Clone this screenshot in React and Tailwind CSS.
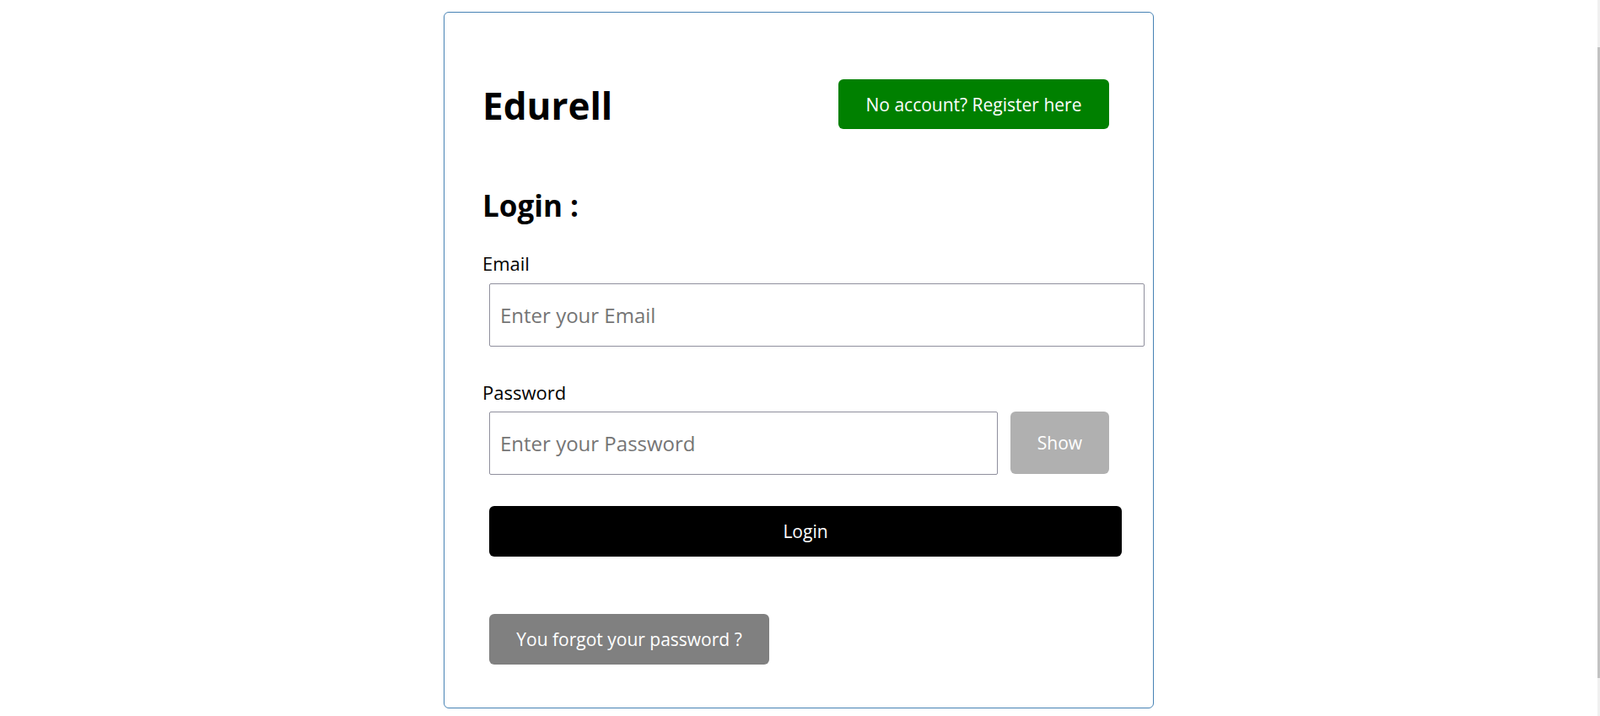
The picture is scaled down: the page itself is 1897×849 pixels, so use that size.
export default function App() {
  const font = { fontFamily: '"Open Sans", "Noto Sans", Arial, sans-serif' };
  return (
    <div className="min-h-screen w-full bg-white relative" style={font}>
      <div className="w-[1894px] pt-[14px] flex justify-center">
        <div className="w-[842px] h-[826px] border border-[#4682b4] rounded-[6px] pt-[79px] pl-[45px] box-border">
          <div className="w-[743px] h-[59px] flex items-center justify-between">
            <h1 className="text-[44px] leading-[59px] pt-[3px] font-bold text-black m-0">Edurell</h1>
            <button className="w-[321px] h-[59px] pt-[2px] bg-[#008000] text-white text-[21px] rounded-[6px]">
              No account? Register here
            </button>
          </div>
          <h2 className="mt-[71px] text-[35px] leading-[40px] font-bold text-black">Login :</h2>
          <label className="block mt-[34px] text-[22px] leading-[28px] text-black">Email</label>
          <input
            type="email"
            placeholder="Enter your Email"
            className="block mt-[10px] ml-[8px] w-[777px] h-[75px] border border-[#8f8f9d] rounded-[2px] pl-[12px] text-[24px] placeholder:text-[#757575] outline-none box-border"
          />
          <label className="block mt-[40px] text-[22px] leading-[28px] text-black">Password</label>
          <div className="mt-[9px] ml-[8px] flex gap-[15px] items-start">
            <input
              type="password"
              placeholder="Enter your Password"
              className="block w-[603px] h-[75px] border border-[#8f8f9d] rounded-[2px] pl-[12px] text-[24px] placeholder:text-[#757575] outline-none box-border"
            />
            <button className="w-[117px] h-[74px] pt-[2px] bg-[#b0b0b0] text-white text-[21px] rounded-[6px]">Show</button>
          </div>
          <button className="block mt-[37px] ml-[8px] w-[750px] h-[60px] pt-[2px] bg-black text-white text-[21px] rounded-[6px]">
            Login
          </button>
          <button className="block mt-[68px] ml-[8px] w-[332px] h-[60px] pt-[2px] bg-[#808080] text-white text-[21px] rounded-[6px]">
            You forgot your password ?
          </button>
        </div>
      </div>
      <div className="fixed top-0 right-0 w-[3px] h-[849px] bg-[#f0f0f0]">
        <div className="mt-[56px] h-[748px] w-[3px] bg-[#c2c2c2]" />
      </div>
    </div>
  );
}
